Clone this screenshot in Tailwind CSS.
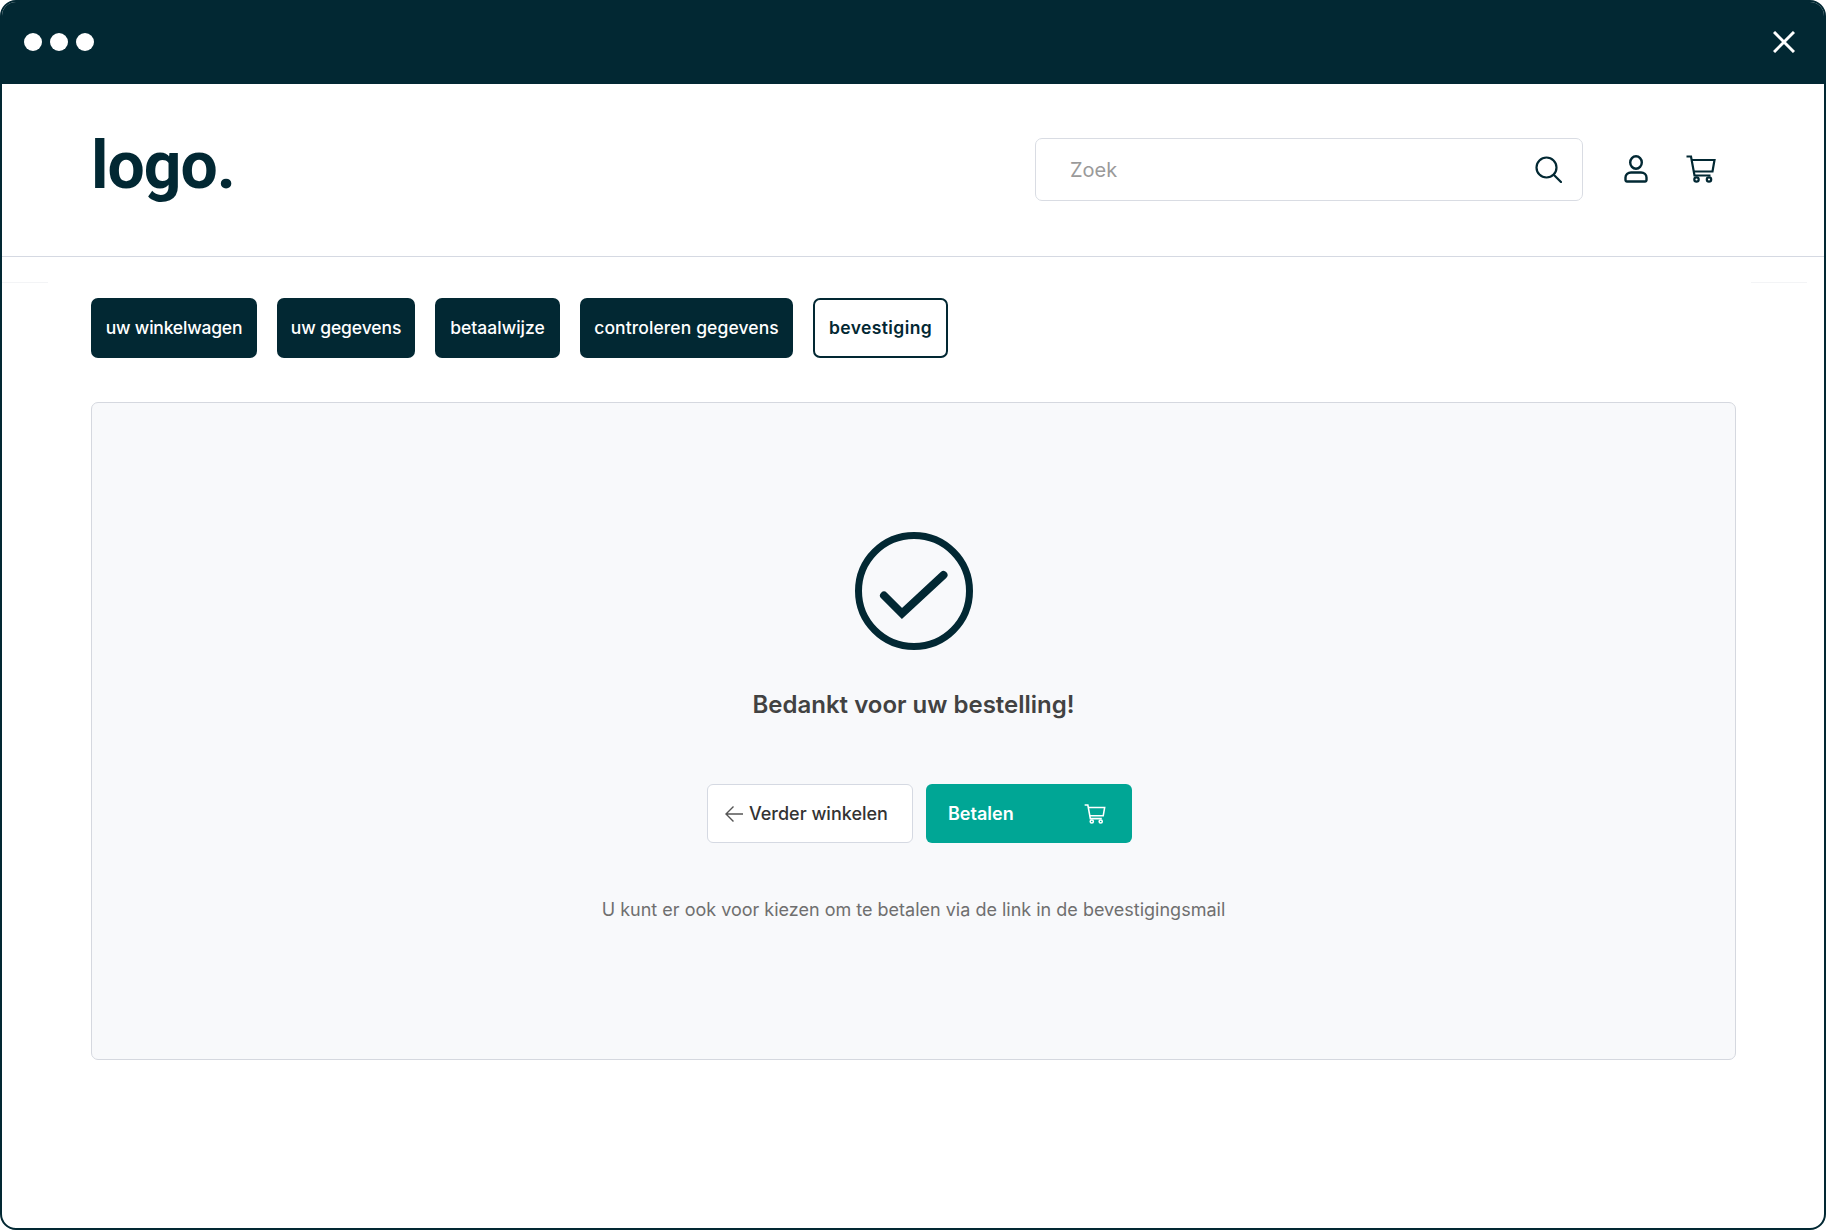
<!DOCTYPE html>
<html lang="nl">
  <head>
    <meta charset="UTF-8" />
    <meta name="viewport" content="width=device-width, initial-scale=1.0" />
    <title>Bevestiging</title>
    <script src="https://cdn.jsdelivr.net/npm/@tailwindcss/browser@4"></script>
  </head>

  <body class="bg-white font-['Inter',sans-serif]">
    <div class="relative w-[1826px] h-[1230px] bg-white border-2 border-[#022833] rounded-[16px] overflow-hidden">
      <!-- Titelbalk -->
      <div class="h-[82px] bg-[#022833] flex items-center justify-between pl-[22px] pr-[29px] pb-[3px]">
        <div class="flex gap-[8px]">
          <span class="w-[18px] h-[18px] rounded-full bg-white"></span>
          <span class="w-[18px] h-[18px] rounded-full bg-white"></span>
          <span class="w-[18px] h-[18px] rounded-full bg-white"></span>
        </div>
        <svg class="w-[22px] h-[22px]" viewBox="0 0 22 22" fill="none" stroke="#fff" stroke-width="3">
          <path d="M1 1 21 21M21 1 1 21" />
        </svg>
      </div>

      <!-- Header -->
      <header class="h-[173px] border-b border-[#d5d9e2] flex items-center pl-[89px] pr-[108px]">
        <div class="font-['Roboto',sans-serif] font-bold text-[66px] leading-none tracking-[-1px] text-[#022833] -mt-[9px]">logo.</div>
        <div class="ml-auto w-[548px] h-[63px] border-[1.5px] border-[#d9dce3] rounded-[7px] flex items-center justify-between pl-[34px] pr-[20px] -mt-[1px]">
          <span class="text-[20px] text-[#9a9a9a]">Zoek</span>
          <svg class="w-[27px] h-[27px]" viewBox="0 0 27 27" fill="none" stroke="#022833" stroke-width="2.2" stroke-linecap="round">
            <circle cx="11.500" cy="11.500" r="10" />
            <path d="M19 19 26 26" />
          </svg>
        </div>
        <svg class="ml-[41px] w-[24px] h-[28px] -mt-[3px]" viewBox="0 0 24 28" fill="none" stroke="#022833" stroke-width="2.400">
          <ellipse cx="12" cy="7.500" rx="5.800" ry="6.200" />
          <path d="M3 26.500h18a1.500 1.500 0 0 0 1.500-1.500v-2.500c0-3-2.500-5-5.500-5H7c-3 0-5.500 2-5.500 5V25A1.500 1.500 0 0 0 3 26.500Z" />
        </svg>
        <svg class="ml-[38px] w-[30px] h-[28px] -mt-[3px]" viewBox="0 0 30 28" fill="none" stroke="#022833" stroke-width="2.200">
          <path d="M0.500 1.500h4.500l3.500 19h16" />
          <path d="M5.500 5h23l-2 11.500H7.500" />
          <circle cx="10.500" cy="24.500" r="2.200" />
          <circle cx="23" cy="24.500" r="2.200" />
        </svg>
      </header>

      <!-- Stappen -->
      <nav class="flex gap-[20px] mt-[41px] ml-[89px] text-[17.500px] font-medium">
        <div class="w-[166px] h-[60px] pt-[1px] rounded-[7px] bg-[#022833] text-white tracking-[-0.2px] flex items-center justify-center">uw winkelwagen</div>
        <div class="w-[138px] h-[60px] pt-[1px] rounded-[7px] bg-[#022833] text-white tracking-[-0.1px] flex items-center justify-center">uw gegevens</div>
        <div class="w-[125px] h-[60px] pt-[1px] rounded-[7px] bg-[#022833] text-white tracking-[0px] flex items-center justify-center">betaalwijze</div>
        <div class="w-[213px] h-[60px] pt-[1px] rounded-[7px] bg-[#022833] text-white tracking-[0.1px] flex items-center justify-center">controleren gegevens</div>
        <div class="w-[135px] h-[60px] pt-[1px] rounded-[7px] bg-white border-2 border-[#022833] text-[#022833] font-semibold tracking-[0.4px] flex items-center justify-center">bevestiging</div>
      </nav>

      <!-- Bevestiging -->
      <main class="ml-[89px] mt-[44px] w-[1645px] h-[658px] bg-[#f8f9fb] border border-[#d5d8df] rounded-[7px] flex flex-col items-center pt-[129px]">
        <svg class="w-[118px] h-[118px]" viewBox="0 0 118 118" fill="none" stroke="#022833">
          <circle cx="59" cy="59" r="55.500" stroke-width="7" />
          <path d="M29 63.500 L47 81.500 L88.500 43" stroke-width="8" stroke-linejoin="miter" stroke-linecap="round" />
        </svg>
        <h1 class="mt-[39px] text-[24px] leading-[32px] font-semibold text-[#424242]">Bedankt voor uw bestelling!</h1>
        <div class="flex gap-[13px] mt-[63px] ml-[12px]">
          <button class="w-[206px] h-[59px] bg-white border border-[#d5d9e2] rounded-[6px] flex items-center pl-[17px] text-[18px] font-medium text-[#333]">
            <svg class="w-[18px] h-[16px] mr-[6px]" viewBox="0 0 18 16" fill="none" stroke="#555" stroke-width="1.400">
              <path d="M18 8H1M8.500 0.500 1 8l7.500 7.500" />
            </svg>
            Verder winkelen
          </button>
          <button class="w-[206px] h-[59px] bg-[#00a695] rounded-[6px] flex items-center justify-between pl-[22px] pr-[26px] text-[18px] font-semibold text-white">
            Betalen
            <svg class="w-[22px] h-[20px]" viewBox="0 0 30 28" fill="none" stroke="#fff" stroke-width="2.200">
              <path d="M0.500 1.500h4.500l3.500 19h16" />
              <path d="M5.500 5h23l-2 11.500H7.500" />
              <circle cx="10.500" cy="24.500" r="2.200" />
              <circle cx="23" cy="24.500" r="2.200" />
            </svg>
          </button>
        </div>
        <p class="mt-[54px] text-[18px] leading-[26px] text-[#6f6f6f]">U kunt er ook voor kiezen om te betalen via de link in de bevestigingsmail</p>
      </main>

      <!-- Vage lijntjes -->
      <div class="absolute left-0 top-[280px] w-[46px] h-px bg-[#f3f4f6]"></div>
      <div class="absolute left-[1749px] top-[280px] w-[56px] h-px bg-[#f3f4f6]"></div>
    </div>
  </body>
</html>
